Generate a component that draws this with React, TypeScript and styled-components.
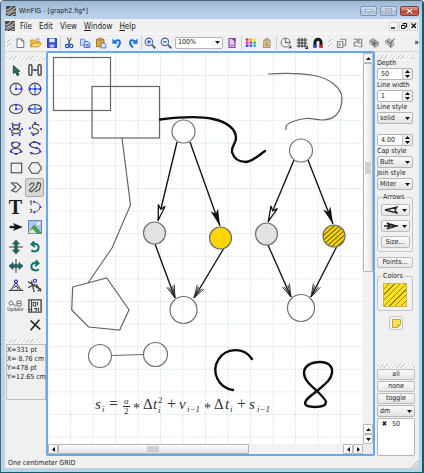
import React from "react";
import styled, { createGlobalStyle, css } from "styled-components";

const GlobalStyle = createGlobalStyle`
  * { box-sizing: border-box; }
  body { margin: 0; }
  body, button, input, select {
    font-family: "DejaVu Sans Condensed", "DejaVu Sans", sans-serif;
    font-size: 7px;
    line-height: 9px;
    color: #1c1c1c;
  }
  button, input, select { margin: 0; padding: 0; }
`;

/* ---------- window chrome ---------- */

const Frame = styled.div`
  min-height: 100vh;
  display: flex;
  flex-direction: column;
  padding: 0 3px 4px 4px;
  background: #b9d2ea;
  border-style: solid;
  border-width: 1px 2px 1px 1px;
  border-color: #55656d #08626b #08626b #4a6672;
  border-radius: 4px 4px 0 0;
`;

const TitleBar = styled.header`
  display: flex;
  align-items: center;
  gap: 3px;
  height: 18px;
  margin: 0 -3px 0 -4px;
  padding: 1px 3px 0 5px;
  background: linear-gradient(#9bb6d4, #b3cae3 50%, #bcd3ec);
`;

const Title = styled.h1`
  flex: 1;
  margin: 0;
  font-size: 7px;
  font-weight: normal;
  line-height: 10px;
`;

const CaptionButtons = styled.div`
  display: flex;
  gap: 3px;
`;

const CaptionButton = styled.button<{ $close?: boolean }>`
  display: grid;
  place-items: center;
  width: ${(p) => (p.$close ? 19 : 17)}px;
  height: 10px;
  border: 1px solid ${(p) => (p.$close ? "#7b3c3c" : "#7d93ae")};
  border-radius: 2px;
  background: ${(p) =>
    p.$close
      ? "linear-gradient(#e3a191, #cd6a55 45%, #bb3c24 50%, #d06e50)"
      : "linear-gradient(#d3e1f1, #bccfe6 45%, #a5bdd9 50%, #b9cee6)"};
`;

const Client = styled.div`
  flex: 1;
  display: flex;
  flex-direction: column;
  background: #f0f0f0;
`;

const MenuBar = styled.nav`
  display: flex;
  align-items: center;
  height: 14px;
  gap: 5px;
`;

const MenuList = styled.div`
  flex: 1;
  display: flex;
  gap: 7px;
`;

const MenuItem = styled.button`
  border: 0;
  background: none;
  font-size: 8px;
  u { text-underline-offset: 1px; }
`;

const ChildButtons = styled.div`
  display: flex;
  gap: 1px;
  padding-right: 1px;
`;

const ChildButton = styled.button`
  display: grid;
  place-items: center;
  width: 9px;
  height: 9px;
  border: 1px solid #d4d4d4;
  background: #f8f8f8;
`;

/* ---------- toolbar ---------- */

const Toolbar = styled.div`
  display: flex;
  align-items: center;
  height: 18px;
  padding-left: 1px;
  border-top: 1px solid #fafafa;
`;

const hatch = css`
  background: repeating-linear-gradient(135deg, #fff 0 1px, #d2d2d2 1px 2px, #f0f0f0 2px 3px);
`;

const Grip = styled.span<{ $vertical?: boolean; $spaced?: boolean }>`
  flex: none;
  ${hatch}
  ${(p) =>
    p.$vertical
      ? css`width: 4px; height: 14px; margin: 0 ${p.$spaced ? 2 : 1}px;`
      : css`height: 4px; align-self: stretch;`}
`;

const ToolButton = styled.button`
  display: grid;
  place-items: center;
  flex: none;
  width: 16px;
  height: 16px;
  border: 0;
  background: none;
`;

const Separator = styled.span<{ $spaced?: boolean }>`
  flex: none;
  width: 1px;
  height: 14px;
  margin: 0 ${(p) => (p.$spaced ? 1 : 0)}px;
  background: #cfcfcf;
`;

const Spacer = styled.span`
  flex: 1;
`;

/* ---------- fields ---------- */

const SelectBox = styled.span<{ $light?: boolean; $width?: number }>`
  display: grid;
  grid-template-columns: 1fr 10px;
  align-items: center;
  flex: none;
  width: ${(p) => (p.$width ? `${p.$width}px` : "auto")};
  height: 12px;
  border: 1px solid #b4b4b4;
  border-radius: 2px;
  background: ${(p) => (p.$light ? "#fff" : "linear-gradient(#fbfbfb, #e2e2e2)")};
  select {
    grid-area: 1 / 1 / 2 / 3;
    appearance: none;
    width: 100%;
    height: 10px;
    padding-left: 2px;
    border: 0;
    outline: 0;
    background: none;
  }
  svg {
    grid-area: 1 / 2 / 2 / 3;
    justify-self: center;
    pointer-events: none;
  }
`;

const ZoomSlot = styled.span`
  display: flex;
  padding: 0 1px;
`;

const Field = styled.label`
  display: flex;
  flex-direction: column;
  line-height: 9px;
  margin-bottom: 1px;
`;

const SpinBox = styled.span`
  display: grid;
  grid-template: 1fr 1fr / 1fr 10px;
  height: 12px;
  border: 1px solid #b4b4b4;
  border-radius: 2px;
  background: #fff;
  input {
    grid-row: 1 / 3;
    min-width: 0;
    width: 100%;
    padding-left: 3px;
    border: 0;
    outline: 0;
    background: none;
  }
  button {
    display: grid;
    place-items: center;
    border: 0;
    border-left: 1px solid #c8c8c8;
    background: #ececec;
  }
`;

/* ---------- body ---------- */

const Body = styled.div`
  flex: 1;
  display: grid;
  grid-template-columns: 41px minmax(0, 1fr) 44px;
`;

const ToolPanel = styled.aside`
  display: flex;
  flex-direction: column;
  padding: 4px 1px 0 1px;
  border-top: 1px solid #d6d6d6;
`;

const ToolGrid = styled.div`
  display: grid;
  grid-template-columns: 19px 19px;
  grid-auto-rows: 1fr;
  height: 275px;
`;

const Tool = styled.button<{ $active?: boolean }>`
  display: grid;
  place-items: center;
  border: 1px solid ${(p) => (p.$active ? "#a8a8a8" : "transparent")};
  border-radius: 2px;
  background: ${(p) => (p.$active ? "#d6d6d6" : "none")};
`;

const Coordinates = styled.output`
  display: block;
  height: 56px;
  padding-top: 1px;
  margin-right: -1px;
  border: 1px solid #bdbdbd;
  line-height: 9px;
  white-space: pre;
`;

const GripRow = styled.div`
  display: flex;
  padding: 4px 2px 1px 0;
`;

const CanvasFrame = styled.main`
  display: grid;
  grid-template: minmax(0, 1fr) 10px / minmax(0, 1fr) 10px;
  border: 2px solid #69a9e9;
  border-radius: 2px;
  background: #ececec;
`;

const Drawing = styled.svg`
  display: block;
  width: 100%;
  height: 100%;
  background: #fff;
`;

const ScrollBar = styled.div<{ $vertical?: boolean }>`
  display: flex;
  flex-direction: ${(p) => (p.$vertical ? "column" : "row")};
  background: #f2f2f2;
  button {
    flex: none;
    display: grid;
    place-items: center;
    width: 10px;
    height: 10px;
    border: 1px solid #b8b8b8;
    border-radius: 1px;
    background: #fafafa;
  }
`;

const Track = styled.div<{ $vertical?: boolean }>`
  flex: 1;
  display: flex;
  flex-direction: ${(p) => (p.$vertical ? "column" : "row")};
`;

const Thumb = styled.div<{ $vertical?: boolean }>`
  display: grid;
  place-items: center;
  border: 1px solid #b4b4b4;
  border-radius: 1px;
  background: linear-gradient(${(p) => (p.$vertical ? "90deg, " : "")}#fdfdfd, #e4e4e4);
  ${(p) => (p.$vertical ? "height: 58%;" : "width: 67%;")}
  &::after {
    content: "";
    width: ${(p) => (p.$vertical ? 6 : 12)}px;
    height: ${(p) => (p.$vertical ? 12 : 6)}px;
    background: radial-gradient(#bbb 1px, transparent 1px) 0 0 / 2px 2px;
    opacity: 0.6;
  }
`;

const Properties = styled.aside`
  display: flex;
  flex-direction: column;
  padding: 3px 4px 0 2px;
  border-top: 1px solid #d6d6d6;
`;

const FieldStack = styled.div`
  display: flex;
  flex-direction: column;
  padding-right: 2px;
`;

const Group = styled.fieldset`
  display: flex;
  flex-direction: column;
  align-items: center;
  gap: 4px;
  min-width: 0;
  margin: 2px 2px 5px 0;
  padding: 2px 2px 3px;
  border: 1px solid #c4c4c4;
  border-radius: 2px;
  legend {
    margin-left: 2px;
    padding: 0 1px;
    line-height: 9px;
  }
`;

const PushButton = styled.button<{ $inset?: boolean; $tall?: boolean }>`
  display: flex;
  align-items: center;
  justify-content: center;
  gap: 3px;
  flex: none;
  width: ${(p) => (p.$inset ? "29px" : "auto")};
  height: ${(p) => (p.$tall ? 12 : 11)}px;
  border: 1px solid #bcbcbc;
  border-radius: 2px;
  background: linear-gradient(#fcfcfc, #e4e4e4);
`;

const Swatch = styled.button`
  width: 24px;
  height: 24px;
  border: 1px solid #c9b85a;
  background: repeating-linear-gradient(135deg, #ffe11a 0 3px, #98872e 3px 4px);
`;

const NoteButton = styled.button`
  display: grid;
  place-items: center;
  align-self: center;
  width: 14px;
  height: 14px;
  border: 1px solid #c6c6c6;
  border-radius: 2px;
  background: #f4f4f4;
`;

const PointsRow = styled.div`
  display: grid;
  padding-right: 2px;
  margin-bottom: 2px;
`;

const Layers = styled.section`
  display: flex;
  flex-direction: column;
  gap: 1px;
  margin-top: auto;
`;

const LayerList = styled.div`
  height: 38px;
  padding: 1px 3px;
  border: 1px solid #b8b8b8;
  border-radius: 2px;
  background: #fff;
  label {
    display: flex;
    align-items: center;
    gap: 4px;
  }
  input {
    appearance: none;
    display: grid;
    place-items: center;
    width: 7px;
    height: 9px;
  }
  input:checked::before { content: "✖"; }
`;

const StatusBar = styled.footer`
  display: flex;
  align-items: center;
  justify-content: space-between;
  height: 12px;
  padding: 2px 0 0 3px;
`;

/* ---------- small drawings ---------- */

type Direction = "up" | "down" | "left" | "right";
const triangles: Record<Direction, string> = {
  up: "M0 4L2.5 1L5 4Z",
  down: "M0 1L2.5 4L5 1Z",
  left: "M4 0L1 2.5L4 5Z",
  right: "M1 0L4 2.5L1 5Z",
};
const Triangle = ({ to = "down" }: { to?: Direction }) => (
  <svg width="5" height="5" viewBox="0 0 5 5" aria-hidden="true">
    <path d={triangles[to]} fill="#111" />
  </svg>
);

const Icon = ({ children, size = 14 }: { children: React.ReactNode; size?: number }) => (
  <svg width={size} height={size} viewBox="0 0 16 16" fill="none" stroke="#444" strokeWidth="1.2" aria-hidden="true">
    {children}
  </svg>
);

const Logo = () => (
  <svg width="10" height="10" viewBox="0 0 10 10" aria-hidden="true">
    <rect width="10" height="10" fill="#4a4a48" />
    <path d="M0 4Q4 4 6 0M0 7Q5 6 10 1M1 10Q4 6 10 5M5 10Q7 8 10 8" stroke="#c2c2bc" strokeWidth="1.1" fill="none" />
  </svg>
);

const Dots = ({ at }: { at: number[][] }) => (
  <g fill="#2a2af0" stroke="none">
    {at.map(([x, y]) => (
      <rect key={`${x}-${y}`} x={x - 1} y={y - 1} width="2.2" height="2.2" />
    ))}
  </g>
);

const blue = "#3f7bf0";
const teal = "#13706c";
const toolbarIcons: Record<string, React.ReactNode> = {
  New: <path d="M4 2.5H10L13 5.5V14H4ZM10 2.5V5.5H13" fill="#fff" stroke="#5d6580" />,
  Open: (
    <>
      <path d="M1 13V4H6L7 5.5H12V8" fill="#f7c548" stroke="#c3861c" />
      <path d="M1 13L4 8H15L12 13Z" fill="#ffe06b" stroke="#c3861c" />
      <path d="M8 3Q11 1 13 4" stroke="#5a86c8" />
    </>
  ),
  Save: (
    <>
      <path d="M2 2H14V14H2Z" fill="#3b4fd8" stroke="#2636a8" />
      <path d="M4.5 2H11.5V7H4.5Z" fill="#e8edff" stroke="none" />
      <path d="M5 10H11V14H5Z" fill="#b8c2f0" stroke="none" />
    </>
  ),
  Cut: (
    <>
      <path d="M6 1L9.5 10M11 1L7 10" stroke="#50607c" strokeWidth="1.5" />
      <circle cx="5.5" cy="12" r="2.2" stroke="#2453a8" strokeWidth="1.7" />
      <circle cx="11" cy="12" r="2.2" stroke="#2453a8" strokeWidth="1.7" />
    </>
  ),
  Copy: (
    <>
      <path d="M2 3H7L9 5V11H2Z" fill="#cfe0ff" stroke="#5d83cc" />
      <path d="M7 6H12L14.5 8.5V14H7Z" fill="#cfe0ff" stroke="#3d68bd" />
      <path d="M9 10H13M9 12H13" stroke="#3d68bd" />
    </>
  ),
  Paste: (
    <>
      <path d="M2 3H12V13H2Z" fill="#e2a63a" stroke="#a86d14" />
      <path d="M5 1.5H9V4H5Z" fill="#ddd" stroke="#777" />
      <path d="M8 8H12L14.5 10V14.5H8Z" fill="#d9e6ff" stroke="#55709e" />
    </>
  ),
  Undo: (
    <>
      <path d="M5 6Q11 2 12 7Q12 11 8 14" stroke="#1d6fdd" strokeWidth="2.6" />
      <path d="M2 2V9H9Z" fill="#1d6fdd" stroke="none" />
    </>
  ),
  Redo: (
    <>
      <path d="M11 6Q5 2 4 7Q4 11 8 14" stroke="#1d6fdd" strokeWidth="2.6" />
      <path d="M14 2V9H7Z" fill="#1d6fdd" stroke="none" />
    </>
  ),
  "Zoom in": (
    <>
      <circle cx="6.5" cy="6.5" r="5" fill="#dceaff" stroke="#5a6a84" strokeWidth="1.4" />
      <path d="M10.5 10.5L15 15" stroke="#4a5a74" strokeWidth="2.5" />
      <path d="M4 6.5H9M6.5 4V9" stroke="#1d5fd0" strokeWidth="1.5" />
    </>
  ),
  "Zoom out": (
    <>
      <circle cx="6.5" cy="6.5" r="5" fill="#dceaff" stroke="#5a6a84" strokeWidth="1.4" />
      <path d="M10.5 10.5L15 15" stroke="#4a5a74" strokeWidth="2.5" />
      <path d="M4 6.5H9" stroke="#1d5fd0" strokeWidth="1.5" />
    </>
  ),
  Page: (
    <>
      <path d="M4 2H12V14H4Z" fill="#e9c9ef" stroke="#84509c" strokeWidth="1.6" />
      <path d="M8 2H12V6ZM6 11H10" fill="#7f4cb0" stroke="#6d3aa0" />
    </>
  ),
  Palette: (
    <g stroke="none">
      {["#e22", "#f90", "#fd3", "#c2e", "#e26", "#2c3", "#33e", "#26e", "#1bb"].map((c, i) => (
        <rect key={c} x={1 + (i % 3) * 5} y={2 + Math.floor(i / 3) * 4} width="3.6" height="3" fill={c} />
      ))}
    </g>
  ),
  Library: (
    <>
      <path d="M4 4H12V14H3Z" fill="#dcc79a" stroke="#a08a5e" />
      <path d="M6 4Q6 1 9 2L11 4M6 7Q11 8 6 11H10" stroke="#927a4a" />
    </>
  ),
  Angle: (
    <>
      <circle cx="7.5" cy="7.5" r="6" stroke="#666" />
      <path d="M7.5 2V7.5H13" stroke="#444" />
      <path d="M11 15H15V11Z" stroke="none" fill="#333" />
    </>
  ),
  Grid: (
    <>
      <path d="M4 1V14M8 1V14M12 1V14M1 4H15M1 8H15M1 12H15" stroke="#333" strokeWidth="1.4" />
      <path d="M12 16H16V12Z" fill="#222" stroke="none" />
    </>
  ),
  Magnet: (
    <>
      <path d="M4 14V7A4 4 0 0 1 12 7V14" stroke="#181820" strokeWidth="4" />
      <path d="M4 10.5V14.5" stroke="#2350d8" strokeWidth="4" />
      <path d="M12 10.5V14.5" stroke="#d82323" strokeWidth="4" />
    </>
  ),
  "Bring forward": <path d="M2 6H9V14H2ZM5 3H13V11H9M5 8V12" stroke="#888" strokeWidth="1.6" />,
  "Send back": <path d="M2 3H7V7H3V12H8M9 3H13V8H9ZM13 4V13H9" stroke="#888" strokeWidth="1.6" />,
  Group: (
    <>
      <path d="M2 5L7 2L14 7V11L9 14L2 8Z" fill="#bbb" stroke="#999" />
      <path d="M4 5L10 10M9 4V13M5 10L13 8" stroke="#666" strokeWidth="1.5" />
    </>
  ),
  Ungroup: (
    <>
      <path d="M2 5L7 2L13 7V11L9 14L2 8Z" fill="#c4c4c4" stroke="#999" />
      <path d="M4 5L10 10M14 2L8 9M9 8V14" stroke="#666" strokeWidth="1.5" />
    </>
  ),
};

const toolIcons: [string, React.ReactNode][] = [
  ["Select", <path key="a" d="M5 3V12L7 10L9.5 14.5L11.5 13.5L9.5 9.5H12.5Z" fill="#167a66" stroke="#222" strokeWidth="0.9" />],
  ["Compound", <g key="a"><rect x="1" y="2" width="3.5" height="12" rx="1.7" strokeWidth="1.6" /><rect x="11.5" y="2" width="3.5" height="12" rx="1.7" strokeWidth="1.6" /><path d="M4.500 8H11.500" /><Dots at={[[8, 8]]} /></g>],
  ["Circle by radius", <g key="a"><circle cx="8" cy="8" r="6.7" /><path d="M8 2V8H14" stroke={blue} /><Dots at={[[8, 8], [14, 8]]} /></g>],
  ["Circle by diameter", <g key="a"><circle cx="8" cy="8" r="6.7" /><path d="M8 2V14M2 8H14" stroke={blue} strokeWidth="1.5" /><Dots at={[[2, 8], [14, 8], [8, 8]]} /></g>],
  ["Ellipse by radius", <g key="a"><ellipse cx="8" cy="8" rx="7.4" ry="5.2" /><path d="M8 3V8H14" stroke={blue} /><Dots at={[[8, 8], [8, 3]]} /></g>],
  ["Ellipse by diameter", <g key="a"><ellipse cx="8" cy="8" rx="7.4" ry="5.2" /><path d="M8 3V13M2 8H14" stroke={blue} strokeWidth="1.5" /><Dots at={[[2, 8], [14, 8]]} /></g>],
  ["Closed spline", <g key="a"><path d="M8 8Q3 7 4 4.5Q8 2 12 4.5Q13 7 8 8Q2 9 3 12Q8 14.5 13 12Q14 9 8 8Z" strokeWidth="1.3" /><Dots at={[[4, 2], [12, 2], [1, 8], [15, 8], [4, 14.5], [12, 14.5]]} /></g>],
  ["Spline", <g key="a"><path d="M13 4Q7 1 5 4Q4 7 9 8Q14 10 11 13Q7 15 3 12" strokeWidth="1.3" /><Dots at={[[8, 1], [2, 7], [15, 8], [6, 15]]} /></g>],
  ["Closed interpolated spline", <g key="a"><path d="M7 8Q1 5 4 2Q9 0 12 3Q13 6 7 8Q1 10 3 13Q8 16 13 13Q15 9 7 8Z" strokeWidth="1.3" /><Dots at={[[4, 2], [12, 3], [7, 8], [2, 12], [8, 15], [14, 12]]} /></g>],
  ["Interpolated spline", <g key="a"><path d="M14 4Q9 0 4 2Q0 5 5 7Q8 8 11 8Q16 11 12 14Q7 16 2 13" strokeWidth="1.3" /><Dots at={[[13, 3], [7, 1], [2, 4], [10, 8], [14, 12], [4, 14]]} /></g>],
  ["Rectangle", <rect key="a" x="2.5" y="2.5" width="12" height="11" />],
  ["Regular polygon", <path key="a" d="M4.5 2H11.5L15.5 8L11.5 14H4.5L0.5 8Z" />],
  ["Polygon", <path key="a" d="M3 3.5H9L14 8L8 14L3 12L8 8Z" />],
  ["Polyline", <path key="a" d="M1.500 6L4 3.500Q8 3 6.500 6L1.500 12L4 13.500L10 8L11 3Q15 3 14.500 6L13 11L8 13.500" strokeWidth="1.2" />],
  ["Text", null],
  ["Arc", <g key="a"><path d="M6 2Q13 3 14 8Q13 13 6 14" strokeDasharray="2 1" /><path d="M2 2L3.5 1V6M2 11Q5 10 4 12Q5 14 2 14" stroke="#555" /><Dots at={[[7, 2], [14, 8], [7, 14]]} /></g>],
  ["Arrow", <path key="a" d="M1 7H7L5 4L15 8L5 12L7 9H1Z" fill="#111" stroke="#111" strokeWidth="0.6" />],
  ["Picture", <g key="a"><rect x="0.5" y="0.5" width="15" height="15" fill="#a9c9f6" stroke="#7179b8" /><path d="M1 13L7 5L15 14V15H1Z" fill="#4b9e46" stroke="none" /><path d="M1 13L5 10L10 15H1Z" fill="#dcead0" stroke="none" /><circle cx="12" cy="4" r="2" fill="#fff2a0" stroke="none" /></g>],
  ["Flip vertical", <g key="a"><path d="M0 8H16" /><path d="M8 0L12 4.500H9.500V11.500H12L8 16L4 11.500H6.500V4.500H4Z" fill={teal} strokeWidth="0.8" /></g>],
  ["Rotate left", <path key="a" d="M5 5Q10 3 12 7Q13 12 8 13Q5 13.5 4 11.5M7 1.5L4 5L8 8" stroke={teal} strokeWidth="2.3" />],
  ["Flip horizontal", <g key="a"><path d="M8 0V16" /><path d="M0 8L4.500 4V6.500H11.500V4L16 8L11.500 12V9.500H4.500V12Z" fill={teal} strokeWidth="0.8" /></g>],
  ["Rotate right", <path key="a" d="M11 5Q6 3 4 7Q3 12 8 13Q11 13.5 12 11.5M9 1.5L12 5L8 8" stroke={teal} strokeWidth="2.3" />],
  ["Measure angle", <g key="a"><path d="M8 4L14 13H2L8 4M0 13H16" /><path d="M6 10L8 8L10 10V12" /><circle cx="8" cy="3" r="1.7" stroke="#2a2af0" /></g>],
  ["Edit points", <g key="a"><path d="M0 3L14 12M4 2L7 15M0 10L8 6M9 6L15 14M11 14L15 11" strokeWidth="1.5" /><circle cx="8" cy="2" r="1.8" stroke="#2a2af0" /></g>],
  ["Update", null],
  ["Library object", <g key="a"><path d="M1 1H15V15H1Z" strokeWidth="1.6" /><path d="M4 1V15M6 4H9V8H6ZM11 3V7M7 11H10L9 14M12 10V14M1 12H5" /></g>],
  ["", null],
  ["Delete", <path key="a" d="M3 3L14 13M13 2L3 14" stroke="#222" strokeWidth="1.7" />],
];

const TextGlyph = styled.span`
  font: bold 20px/18px "Liberation Serif", serif;
`;

const UpdateFace = styled.span`
  display: flex;
  flex-direction: column;
  align-items: center;
  font-size: 5px;
  line-height: 5px;
`;

const toolFace = (name: string, icon: React.ReactNode) => {
  if (name === "Text") return <TextGlyph>T</TextGlyph>;
  if (name === "Update")
    return (
      <UpdateFace>
        <svg width="14" height="7" viewBox="0 0 14 7" fill="none" stroke="#777" aria-hidden="true">
          <circle cx="3" cy="3" r="2" />
          <path d="M5 4L8 6M9 1H13V6H9ZM9 3.5H13" />
        </svg>
        Update
      </UpdateFace>
    );
  return <Icon>{icon}</Icon>;
};

/* ---------- figure ---------- */

type Head = "filled" | "hollow" | "stick";
const arrows: { from: [number, number]; to: [number, number]; head: Head }[] = [
  { from: [177, 142], to: [158, 221], head: "hollow" },
  { from: [190, 142], to: [220, 226], head: "filled" },
  { from: [294, 160], to: [268, 222], head: "hollow" },
  { from: [308, 160], to: [333, 224], head: "filled" },
  { from: [155, 244], to: [175, 298], head: "stick" },
  { from: [224, 248], to: [194, 298], head: "stick" },
  { from: [268, 245], to: [291, 297], head: "stick" },
  { from: [337, 246], to: [311, 297], head: "stick" },
];

const nodes: [number, number, number, string][] = [
  [183.5, 131.5, 11.5, "#fff"],
  [301, 150.5, 11.5, "#fff"],
  [154.5, 233, 11, "#e2e2e2"],
  [220.5, 238, 11, "#ffd500"],
  [266.5, 234, 11, "#e2e2e2"],
  [334, 236, 11, "url(#stripes)"],
  [183.5, 310, 13.5, "none"],
  [301, 308, 13.5, "none"],
  [100, 356, 11.5, "none"],
  [155.5, 354.5, 12, "none"],
];

const MathText = styled.text<{ $size?: number; $upright?: boolean }>`
  font-family: "Liberation Serif", serif;
  font-size: ${(p) => p.$size ?? 15}px;
  font-style: ${(p) => (p.$upright ? "normal" : "italic")};
  fill: #333;
`;

const formula: { t: string; x: number; y?: number; size?: number; upright?: boolean }[] = [
  { t: "s", x: 95 },
  { t: "i", x: 102, y: 412, size: 9 },
  { t: "=", x: 109, size: 16, upright: true },
  { t: "a", x: 124, y: 404, size: 9 },
  { t: "2", x: 124, y: 414, size: 9, upright: true },
  { t: "*", x: 133, y: 413, size: 14, upright: true },
  { t: "Δ", x: 143, size: 15, upright: true },
  { t: "t", x: 153, size: 15 },
  { t: "2", x: 158, y: 403, size: 9, upright: true },
  { t: "i", x: 158, y: 413, size: 9 },
  { t: "+", x: 167, size: 16, upright: true },
  { t: "v", x: 179 },
  { t: "i−1", x: 187, y: 412, size: 9 },
  { t: "*", x: 204, y: 413, size: 14, upright: true },
  { t: "Δ", x: 214, size: 15, upright: true },
  { t: "t", x: 225, size: 15 },
  { t: "i", x: 230, y: 412, size: 9 },
  { t: "+", x: 237, size: 16, upright: true },
  { t: "s", x: 249 },
  { t: "i−1", x: 257, y: 412, size: 9 },
];

const Figure = () => (
  <Drawing role="img" aria-label="Drawing">
    <defs>
      <pattern id="centimeters" x="70" y="75" width="22.5" height="22.6" patternUnits="userSpaceOnUse">
        <path d="M0.5 0V23M0 0.5H23" stroke="#dcebea" strokeDasharray="2 1" />
      </pattern>
      <pattern id="stripes" width="3" height="3.4" patternUnits="userSpaceOnUse" patternTransform="rotate(-42)">
        <rect width="3" height="4" fill="#ffd900" />
        <rect width="3" height="1" fill="#5c5310" />
      </pattern>
      <marker id="filled" markerUnits="userSpaceOnUse" markerWidth="18" markerHeight="10" refX="17" refY="5" orient="auto">
        <path d="M17 5L0 9L4 5L0 1Z" fill="#111" />
      </marker>
      <marker id="hollow" markerUnits="userSpaceOnUse" markerWidth="18" markerHeight="10" refX="17" refY="5" orient="auto">
        <path d="M16 5L1 8.5L5 5L1 1.5Z" fill="#fff" stroke="#111" strokeWidth="1.3" />
      </marker>
      <marker id="stick" markerUnits="userSpaceOnUse" markerWidth="16" markerHeight="12" refX="14" refY="6" orient="auto">
        <path d="M1 10L14 6L1 2M2 8L14 6L2 4" fill="none" stroke="#222" strokeWidth="0.8" />
      </marker>
    </defs>
    <g transform="translate(-48 -53)" fill="none">
      <rect x="48" y="53" width="4000" height="4000" fill="url(#centimeters)" />
      <g stroke="#666" strokeWidth="1.2">
        <rect x="53.5" y="57.5" width="57" height="53" />
        <rect x="92" y="86.5" width="67.5" height="51.5" />
        <path d="M122 138L130.5 205L112 248L88 283" />
        <path d="M72.7 287L106.7 278L129 309.7L119.7 330L88.7 327L71.7 310Z" />
        <path d="M111 355.5L143 354.5" />
        <path d="M268 74C285 73 300 73 314 75.5C330 78 342 89 342 98C342 114 333 120 322 120C316 120 312 118 306 118.5C298 119 286 123 286 127V130" />
      </g>
      <g stroke="#0c0c0c" strokeWidth="2.4" strokeLinecap="round">
        <path d="M160 119.5C180 117 200 116 213 119C227 122 236 129 236 138C236 144 231 146 232 152C234 159 239 162 246 162C253 161 258 156 265 151" />
        <path d="M252 359A20 20 0 1 0 233 390" />
        <path d="M317 391C309 384 304 379 304 373C304 366 311 362 320 362C328 362 333 366 332 373C331 380 325 384 317 391C309 397 305 400 305 403C305 406 310 407 315 407C321 407 326 406 326 402C326 400 322 396 317 391Z" />
      </g>
      {arrows.map(({ from, to, head }) => (
        <path key={from.join()} d={`M${from}L${to}`} stroke="#151515" strokeWidth="1.4" markerEnd={`url(#${head})`} />
      ))}
      {nodes.map(([cx, cy, r, fill]) => (
        <circle key={`${cx}-${cy}`} cx={cx} cy={cy} r={r} fill={fill} stroke="#707070" strokeWidth="1.2" />
      ))}
      <path d="M123 406.5H130" stroke="#333" />
      {formula.map((f) => (
        <MathText key={f.x + f.t} x={f.x} y={f.y ?? 409} $size={f.size} $upright={f.upright}>
          {f.t}
        </MathText>
      ))}
    </g>
  </Drawing>
);

/* ---------- composed parts ---------- */

const Select = ({ label, value, options = [], light, width }: {
  label?: string; value: string; options?: string[]; light?: boolean; width?: number;
}) => (
  <SelectBox $light={light} $width={width}>
    <select aria-label={label} defaultValue={value}>
      {[value, ...options].map((o) => <option key={o}>{o}</option>)}
    </select>
    <Triangle />
  </SelectBox>
);

const Spin = ({ label, value }: { label: string; value: string }) => (
  <SpinBox>
    <input aria-label={label} defaultValue={value} />
    <button type="button" aria-label={`Increase ${label}`}><Triangle to="up" /></button>
    <button type="button" aria-label={`Decrease ${label}`}><Triangle /></button>
  </SpinBox>
);

const Tools = ({ names }: { names: string[] }) => (
  <>
    {names.map((n) => (
      <ToolButton key={n} type="button" aria-label={n}><Icon size={12}>{toolbarIcons[n]}</Icon></ToolButton>
    ))}
  </>
);

export default function App() {
  return (
    <>
      <GlobalStyle />
      <Frame>
        <TitleBar>
          <Logo />
          <Title>WinFIG - [graph2.fig*]</Title>
          <CaptionButtons>
            <CaptionButton aria-label="Minimize">
              <svg width="7" height="3"><rect x="0.5" y="0.5" width="6" height="2" fill="#fff" stroke="#66758a" strokeWidth="0.5" /></svg>
            </CaptionButton>
            <CaptionButton aria-label="Maximize">
              <svg width="7" height="6"><rect x="1" y="1" width="5" height="4" fill="none" stroke="#566880" strokeWidth="2" /><rect x="1" y="1" width="5" height="4" fill="none" stroke="#fff" /></svg>
            </CaptionButton>
            <CaptionButton $close aria-label="Close">
              <svg width="7" height="6"><path d="M1 1L6 5M6 1L1 5" stroke="#6b3a3a" strokeWidth="2.5" /><path d="M1 1L6 5M6 1L1 5" stroke="#fff" strokeWidth="1.5" /></svg>
            </CaptionButton>
          </CaptionButtons>
        </TitleBar>
        <Client>
          <MenuBar>
            <Logo />
            <MenuList>
              <MenuItem>File</MenuItem>
              <MenuItem>Edit</MenuItem>
              <MenuItem>View</MenuItem>
              <MenuItem><u>W</u>indow</MenuItem>
              <MenuItem><u>H</u>elp</MenuItem>
            </MenuList>
            <ChildButtons>
              <ChildButton aria-label="Minimize drawing">
                <svg width="5" height="5"><path d="M0 4H4" stroke="#111" strokeWidth="1.5" /></svg>
              </ChildButton>
              <ChildButton aria-label="Restore drawing">
                <svg width="6" height="6" fill="none" stroke="#111"><path d="M2 2V0.5H5.5V4H4M0.5 2.5H4V5.5H0.5Z" /></svg>
              </ChildButton>
              <ChildButton aria-label="Close drawing">
                <svg width="6" height="6"><path d="M0.5 0.5L5 5M5 0.5L0.5 5" stroke="#111" strokeWidth="1.3" /></svg>
              </ChildButton>
            </ChildButtons>
          </MenuBar>
          <Toolbar>
            <Grip $vertical />
            <Tools names={["New", "Open", "Save"]} />
            <Separator />
            <Tools names={["Cut", "Copy", "Paste", "Undo", "Redo"]} />
            <Separator />
            <Tools names={["Zoom in", "Zoom out"]} />
            <ZoomSlot>
              <Select label="Zoom" value="100%" options={["50%", "200%"]} light width={48} />
            </ZoomSlot>
            <Tools names={["Page"]} />
            <Separator $spaced />
            <Tools names={["Palette", "Library"]} />
            <Separator $spaced />
            <Tools names={["Angle", "Grid", "Magnet"]} />
            <Grip $vertical $spaced />
            <Tools names={["Bring forward", "Send back", "Group", "Ungroup"]} />
            <Spacer />
            <MenuItem aria-label="More tools"><b>»</b></MenuItem>
          </Toolbar>
          <Body>
            <ToolPanel>
              <Grip />
              <ToolGrid>
                {toolIcons.map(([name, icon]) =>
                  name ? (
                    <Tool key={name} type="button" aria-label={name} $active={name === "Polyline"}>
                      {toolFace(name, icon)}
                    </Tool>
                  ) : (
                    <span key="empty" />
                  ),
                )}
              </ToolGrid>
              <GripRow><Spacer as={Grip} /></GripRow>
              <Coordinates>{"X=331 pt\nX= 8.76 cm\nY=478 pt\nY=12.65 cm"}</Coordinates>
            </ToolPanel>
            <CanvasFrame>
              <Figure />
              <ScrollBar $vertical>
                <button type="button" aria-label="Scroll up"><Triangle to="up" /></button>
                <Track $vertical><Thumb $vertical /></Track>
                <button type="button" aria-label="Page up"><Triangle to="up" /></button>
                <button type="button" aria-label="Scroll down"><Triangle /></button>
              </ScrollBar>
              <ScrollBar>
                <button type="button" aria-label="Scroll left"><Triangle to="left" /></button>
                <Track><Thumb /></Track>
                <button type="button" aria-label="Page left"><Triangle to="left" /></button>
                <button type="button" aria-label="Scroll right"><Triangle to="right" /></button>
              </ScrollBar>
            </CanvasFrame>
            <Properties>
              <Grip />
              <FieldStack>
                <Field>Depth<Spin label="Depth" value="50" /></Field>
                <Field>Line width<Spin label="Line width" value="1" /></Field>
                <Field>Line style<Select value="solid" options={["dashed"]} /></Field>
                <Field>{"\u00a0"}<Spin label="Dash length" value="4.00" /></Field>
                <Field>Cap style<Select value="Butt" options={["Round"]} /></Field>
                <Field>Join style<Select value="Miter" options={["Bevel"]} /></Field>
              </FieldStack>
              <Group>
                <legend>Arrows</legend>
                <PushButton $inset $tall aria-label="Backward arrow">
                  <svg width="15" height="8" fill="none" stroke="#222" strokeWidth="1.3"><path d="M1 4L13 1L11 4L13 7Z" /></svg>
                  <Triangle />
                </PushButton>
                <PushButton $inset $tall aria-label="Forward arrow">
                  <svg width="15" height="8" fill="none" stroke="#222" strokeWidth="1.3"><path d="M0 4H14M3 1L13 4L3 7L6 4Z" /></svg>
                  <Triangle />
                </PushButton>
                <PushButton $inset $tall>Size...</PushButton>
              </Group>
              <PointsRow><PushButton>Points...</PushButton></PointsRow>
              <Group>
                <legend>Colors</legend>
                <Swatch type="button" aria-label="Fill pattern" />
              </Group>
              <NoteButton type="button" aria-label="Note">
                <svg width="9" height="9"><path d="M0.5 0.5H8.5V5.5L5.5 8.5H0.5Z" fill="#ffdf62" stroke="#d0a020" /><path d="M8.5 5.5H5.5V8.5Z" fill="#d9a11c" /></svg>
              </NoteButton>
              <Layers>
                <Grip />
                <PushButton>all</PushButton>
                <PushButton>none</PushButton>
                <PushButton>toggle</PushButton>
                <Select label="Depth display" value="dm" options={["pt"]} />
                <LayerList>
                  <label><input type="checkbox" defaultChecked />50</label>
                </LayerList>
              </Layers>
            </Properties>
          </Body>
          <StatusBar>
            <span>One centimeter GRID</span>
            <svg width="9" height="9" aria-hidden="true"><path d="M1 9L9 1M4 9L9 4M7 9L9 7" stroke="#aaa" /></svg>
          </StatusBar>
        </Client>
      </Frame>
    </>
  );
}
